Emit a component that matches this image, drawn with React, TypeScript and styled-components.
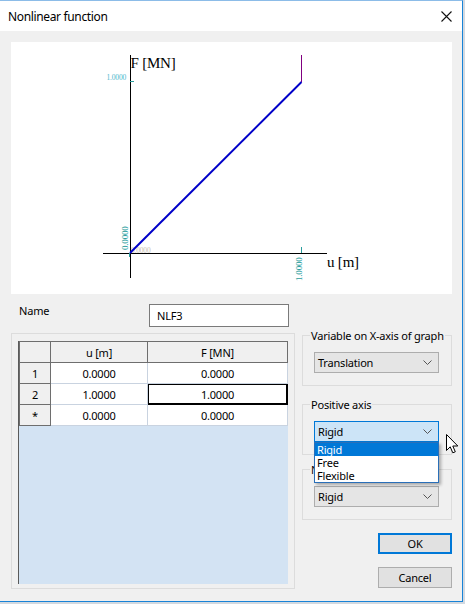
import React from "react";
import styled, { createGlobalStyle } from "styled-components";

const GlobalStyle = createGlobalStyle`
  html, body {
    margin: 0;
    padding: 0;
    background: #d3d9e0;
  }
  body {
    font-family: "Noto Sans", "Liberation Sans", sans-serif;
    font-size: 11px;
    letter-spacing: -0.2px;
    color: #000;
  }
`;

const Window = styled.div`
  position: relative;
  width: 462px;
  height: 600px;
  background: #f0f0f0;
  border-top: 1px solid #8cbce8;
  border-right: 1px solid #1883d7;
  border-bottom: 1px solid #1883d7;
  display: flex;
  flex-direction: column;
`;

const TitleBar = styled.div`
  height: 30px;
  background: #fff;
  display: flex;
  align-items: center;
  justify-content: space-between;
  padding: 0 10px 0 8px;
`;

const Title = styled.span`
  font-size: 12px;
  letter-spacing: -0.35px;
`;

const Body = styled.div`
  padding: 11px 10px 0 11px;
  display: flex;
  flex-direction: column;
`;

const GraphPanel = styled.div`
  height: 252px;
  background: #fff;
`;

const NameRow = styled.div`
  margin-top: 10px;
  display: flex;
  align-items: flex-start;
  padding-left: 8px;
`;

const NameLabel = styled.span`
  width: 130px;
  margin-top: -1px;
`;

const NameInput = styled.div`
  box-sizing: border-box;
  width: 140px;
  height: 23px;
  border: 1px solid #7a7a7a;
  background: #fff;
  padding-left: 7px;
  line-height: 21px;
`;

const BottomRow = styled.div`
  margin-top: 2px;
  display: grid;
  grid-template-columns: 284px 150px;
  column-gap: 7px;
  align-items: start;
`;

const TableGroup = styled.div`
  box-sizing: border-box;
  margin-top: 4px;
  height: 256px;
  border: 1px solid #dcdcdc;
  padding: 7px 6px 4px 6px;
`;

const GridView = styled.div`
  box-sizing: border-box;
  width: 270px;
  height: 243px;
  background: #d3e3f3;
  border-left: 1px solid #5a5a5a;
  overflow: hidden;
`;

const GridTable = styled.table`
  border-collapse: collapse;
  table-layout: fixed;
  width: 269px;
`;

const HeadCell = styled.th<{ $w?: number }>`
  width: ${(p) => (p.$w ? `${p.$w}px` : "auto")};
  height: 20px;
  padding: 0;
  font-weight: normal;
  background: #f0f0f0;
  border: 1px solid #6e6e6e;
  text-align: center;
`;

const RowHead = styled.td`
  height: 20px;
  padding: 0;
  background: #f0f0f0;
  border: 1px solid #6e6e6e;
  text-align: center;
`;

const DataCell = styled.td<{ $selected?: boolean }>`
  height: 20px;
  padding: 0;
  background: #fff;
  text-align: center;
  border: 1px solid ${(p) => (p.$selected ? "#000" : "#c9d3e0")};
  box-shadow: ${(p) => (p.$selected ? "inset 0 0 0 1px #000" : "none")};
`;

const RightColumn = styled.div`
  display: flex;
  flex-direction: column;
`;

const Group = styled.fieldset<{ $top: number }>`
  margin: ${(p) => p.$top}px 0 0 0;
  padding: 0 11px 12px 11px;
  border: 1px solid #dcdcdc;
  min-width: 0;
`;

const Legend = styled.legend`
  margin-left: -4px;
  margin-right: -20px;
  padding: 0 1px;
  line-height: 13px;
  font-size: 11px;
  white-space: nowrap;
`;

const ComboWrap = styled.div`
  position: relative;
  margin-top: 10px;
  width: 125px;
`;

const Combo = styled.div<{ $focused?: boolean }>`
  box-sizing: border-box;
  height: 21px;
  border: 1px solid ${(p) => (p.$focused ? "#0078d7" : "#adadad")};
  background: ${(p) => (p.$focused ? "#cce4f7" : "#e5e5e5")};
  display: flex;
  align-items: center;
  justify-content: space-between;
  padding: 0 6px 0 3px;
`;

const DropList = styled.div`
  position: absolute;
  top: 100%;
  left: 0;
  z-index: 2;
  box-sizing: border-box;
  width: 125px;
  background: #fff;
  border: 1px solid #2a6fb8;
  box-shadow: 2px 2px 3px rgba(0, 0, 0, 0.3);
`;

const DropItem = styled.div<{ $active?: boolean }>`
  height: 13px;
  line-height: 13px;
  padding-left: 2px;
  background: ${(p) => (p.$active ? "#0078d7" : "#fff")};
  color: ${(p) => (p.$active ? "#fff" : "#000")};
`;

const Button = styled.div<{ $default?: boolean; $top: number }>`
  box-sizing: border-box;
  align-self: flex-end;
  margin-top: ${(p) => p.$top}px;
  width: 74px;
  height: 21px;
  background: #e1e1e1;
  border: ${(p) => (p.$default ? "2px solid #0078d7" : "1px solid #adadad")};
  display: flex;
  align-items: center;
  justify-content: center;
`;

const Cursor = styled.svg`
  position: absolute;
  left: 446px;
  top: 433px;
  z-index: 3;
`;

const Chevron = () => (
  <svg width="9" height="6" viewBox="0 0 9 6">
    <polyline points="0.5,0.5 4.5,4.5 8.5,0.5" fill="none" stroke="#555" strokeWidth="1" />
  </svg>
);

const CloseIcon = () => (
  <svg width="11" height="11" viewBox="0 0 11 11">
    <path d="M0.5 0.5 L10.5 10.5 M10.5 0.5 L0.5 10.5" stroke="#111" strokeWidth="1.1" />
  </svg>
);

const teal = "#2a9d9d";

const Graph = () => (
  <svg width="441" height="252" viewBox="0 0 441 252">
    <g shapeRendering="crispEdges">
      <line x1="119.5" y1="13" x2="119.5" y2="236" stroke="#000" strokeWidth="1.3" />
      <line x1="92" y1="211.5" x2="316" y2="211.5" stroke="#000" strokeWidth="1.3" />
      <line x1="119" y1="39.5" x2="123" y2="39.5" stroke={teal} />
      <line x1="290.5" y1="205" x2="290.5" y2="211" stroke={teal} />
      <line x1="118.5" y1="211" x2="118.5" y2="215" stroke={teal} />
      <line x1="290.5" y1="13" x2="290.5" y2="40" stroke="#800080" />
    </g>
    <text x="120" y="210.5" fontFamily="Liberation Serif, serif" fontSize="7.5" fill="#c9beb3">
      0.0000
    </text>
    <line x1="119" y1="211" x2="290.5" y2="40" stroke="#0000c8" strokeWidth="2" />
    <text x="119.5" y="25.5" fontFamily="Liberation Serif, serif" fontSize="15" fill="#000">
      F [MN]
    </text>
    <text x="316" y="225" fontFamily="Liberation Serif, serif" fontSize="15" fill="#000">
      u [m]
    </text>
    <text x="115" y="37.5" textAnchor="end" fontFamily="Liberation Serif, serif" fontSize="7.5" fill="#4cb8cc">
      1.0000
    </text>
    <text
      transform="translate(116.5 208) rotate(-90)"
      fontFamily="Liberation Serif, serif"
      fontSize="9"
      fill={teal}
    >
      0.0000
    </text>
    <text
      transform="translate(290.5 239) rotate(-90)"
      fontFamily="Liberation Serif, serif"
      fontSize="9"
      fill={teal}
    >
      1.0000
    </text>
  </svg>
);

const rows = [
  { head: "1", u: "0.0000", f: "0.0000" },
  { head: "2", u: "1.0000", f: "1.0000", selected: true },
  { head: "*", u: "0.0000", f: "0.0000" },
];

const App: React.FC = () => {
  return (
    <>
      <GlobalStyle />
      <Window>
        <TitleBar>
          <Title>Nonlinear function</Title>
          <CloseIcon />
        </TitleBar>
        <Body>
          <GraphPanel>
            <Graph />
          </GraphPanel>
          <NameRow>
            <NameLabel>Name</NameLabel>
            <NameInput>NLF3</NameInput>
          </NameRow>
          <BottomRow>
            <TableGroup>
              <GridView>
                <GridTable>
                  <thead>
                    <tr>
                      <HeadCell $w={30}></HeadCell>
                      <HeadCell $w={96}>u [m]</HeadCell>
                      <HeadCell>F [MN]</HeadCell>
                    </tr>
                  </thead>
                  <tbody>
                    {rows.map((r) => (
                      <tr key={r.head}>
                        <RowHead>{r.head}</RowHead>
                        <DataCell>{r.u}</DataCell>
                        <DataCell $selected={r.selected}>{r.f}</DataCell>
                      </tr>
                    ))}
                  </tbody>
                </GridTable>
              </GridView>
            </TableGroup>
            <RightColumn>
              <Group $top={0}>
                <Legend>Variable on X-axis of graph</Legend>
                <ComboWrap>
                  <Combo>
                    <span>Translation</span>
                    <Chevron />
                  </Combo>
                </ComboWrap>
              </Group>
              <Group $top={12}>
                <Legend>Positive axis</Legend>
                <ComboWrap>
                  <Combo $focused>
                    <span>Rigid</span>
                    <Chevron />
                  </Combo>
                  <DropList>
                    <DropItem $active>Rigid</DropItem>
                    <DropItem>Free</DropItem>
                    <DropItem>Flexible</DropItem>
                  </DropList>
                </ComboWrap>
              </Group>
              <Group $top={8}>
                <Legend>Negative axis</Legend>
                <ComboWrap>
                  <Combo>
                    <span>Rigid</span>
                    <Chevron />
                  </Combo>
                </ComboWrap>
              </Group>
              <Button $default $top={13}>OK</Button>
              <Button $top={13}>Cancel</Button>
            </RightColumn>
          </BottomRow>
        </Body>
        <Cursor width="13" height="21" viewBox="0 0 13 21">
          <path
            d="M0.5 0.5 L0.5 16.5 L4.2 12.8 L6.8 18.8 L9.3 17.8 L6.8 12 L11.8 12 Z"
            fill="#fff"
            stroke="#000"
            strokeWidth="1"
          />
        </Cursor>
      </Window>
    </>
  );
};

export default App;
